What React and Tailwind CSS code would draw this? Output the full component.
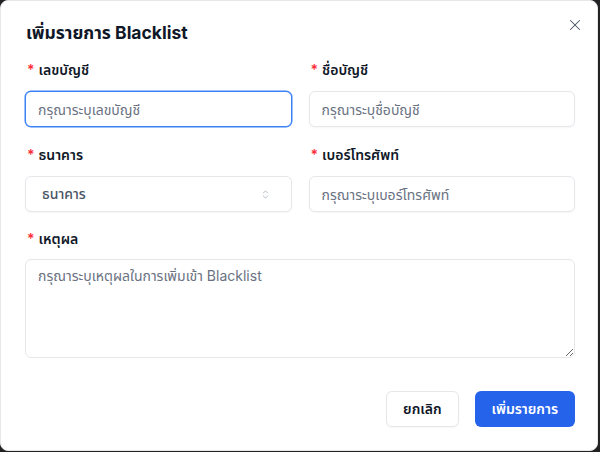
import React from "react";
import { ChevronsUpDown, X } from "lucide-react";

const font = { fontFamily: 'Inter, "Noto Sans Thai", "Noto Sans", sans-serif' };

function Label({ children }) {
  return (
    <div className="flex items-center gap-1 h-5 text-sm font-semibold text-gray-900 pl-[2px]">
      <span className="text-red-500">*</span>
      <span>{children}</span>
    </div>
  );
}

function Input({ placeholder, focused }) {
  return (
    <input
      placeholder={placeholder}
      className={
        "w-full h-9 rounded-md px-3 text-sm bg-white outline-none placeholder:text-gray-500 " +
        (focused ? "border border-[#3b82f6] ring-[0.5px] ring-[#3b82f6]" : "border border-gray-200 shadow-[0_1px_2px_rgba(0,0,0,0.04)]")
      }
      style={font}
    />
  );
}

export default function App() {
  return (
    <div className="w-[600px] h-[452px] bg-[#222]" style={font}>
      <div className="relative w-[598px] h-[451px] bg-white rounded-lg border border-gray-200 pl-6 pr-[22px] pt-[18px]">
        <button className="absolute right-[13px] top-[15px] text-gray-600">
          <X size={18} strokeWidth={1.4} />
        </button>
        <h2 className="text-[17.5px] font-bold text-gray-900 leading-7 pl-[1px]">เพิ่มรายการ Blacklist</h2>
        <div className="grid grid-cols-2 gap-x-[17px] mt-[13px] gap-y-[18px]">
          <div className="flex flex-col gap-[11px]">
            <Label>เลขบัญชี</Label>
            <Input placeholder="กรุณาระบุเลขบัญชี" focused />
          </div>
          <div className="flex flex-col gap-[11px]">
            <Label>ชื่อบัญชี</Label>
            <Input placeholder="กรุณาระบุชื่อบัญชี" />
          </div>
          <div className="flex flex-col gap-[11px]">
            <Label>ธนาคาร</Label>
            <div className="w-full h-9 rounded-md border border-gray-200 bg-white flex items-center justify-between pl-4 pr-5 shadow-[0_1px_2px_rgba(0,0,0,0.04)]">
              <span className="text-sm font-medium text-gray-600">ธนาคาร</span>
              <ChevronsUpDown size={11} className="text-gray-400" strokeWidth={1.5} />
            </div>
          </div>
          <div className="flex flex-col gap-[11px]">
            <Label>เบอร์โทรศัพท์</Label>
            <Input placeholder="กรุณาระบุเบอร์โทรศัพท์" />
          </div>
          <div className="col-span-2 flex flex-col gap-[10px] -mt-[1px]">
            <Label>เหตุผล</Label>
            <textarea
              placeholder="กรุณาระบุเหตุผลในการเพิ่มเข้า Blacklist"
              className="w-full h-[99px] rounded-md border border-gray-200 px-3 py-[6px] text-sm outline-none placeholder:text-gray-500 bg-white"
              style={font}
            />
          </div>
        </div>
        <div className="flex justify-end gap-4 mt-[33px]">
          <button className="h-9 px-4 rounded-md border border-gray-200 bg-white text-sm font-semibold text-gray-900 shadow-[0_1px_2px_rgba(0,0,0,0.04)]">
            ยกเลิก
          </button>
          <button className="h-9 px-[17px] rounded-md bg-[#2563eb] text-sm font-semibold text-white">
            เพิ่มรายการ
          </button>
        </div>
      </div>
    </div>
  );
}
